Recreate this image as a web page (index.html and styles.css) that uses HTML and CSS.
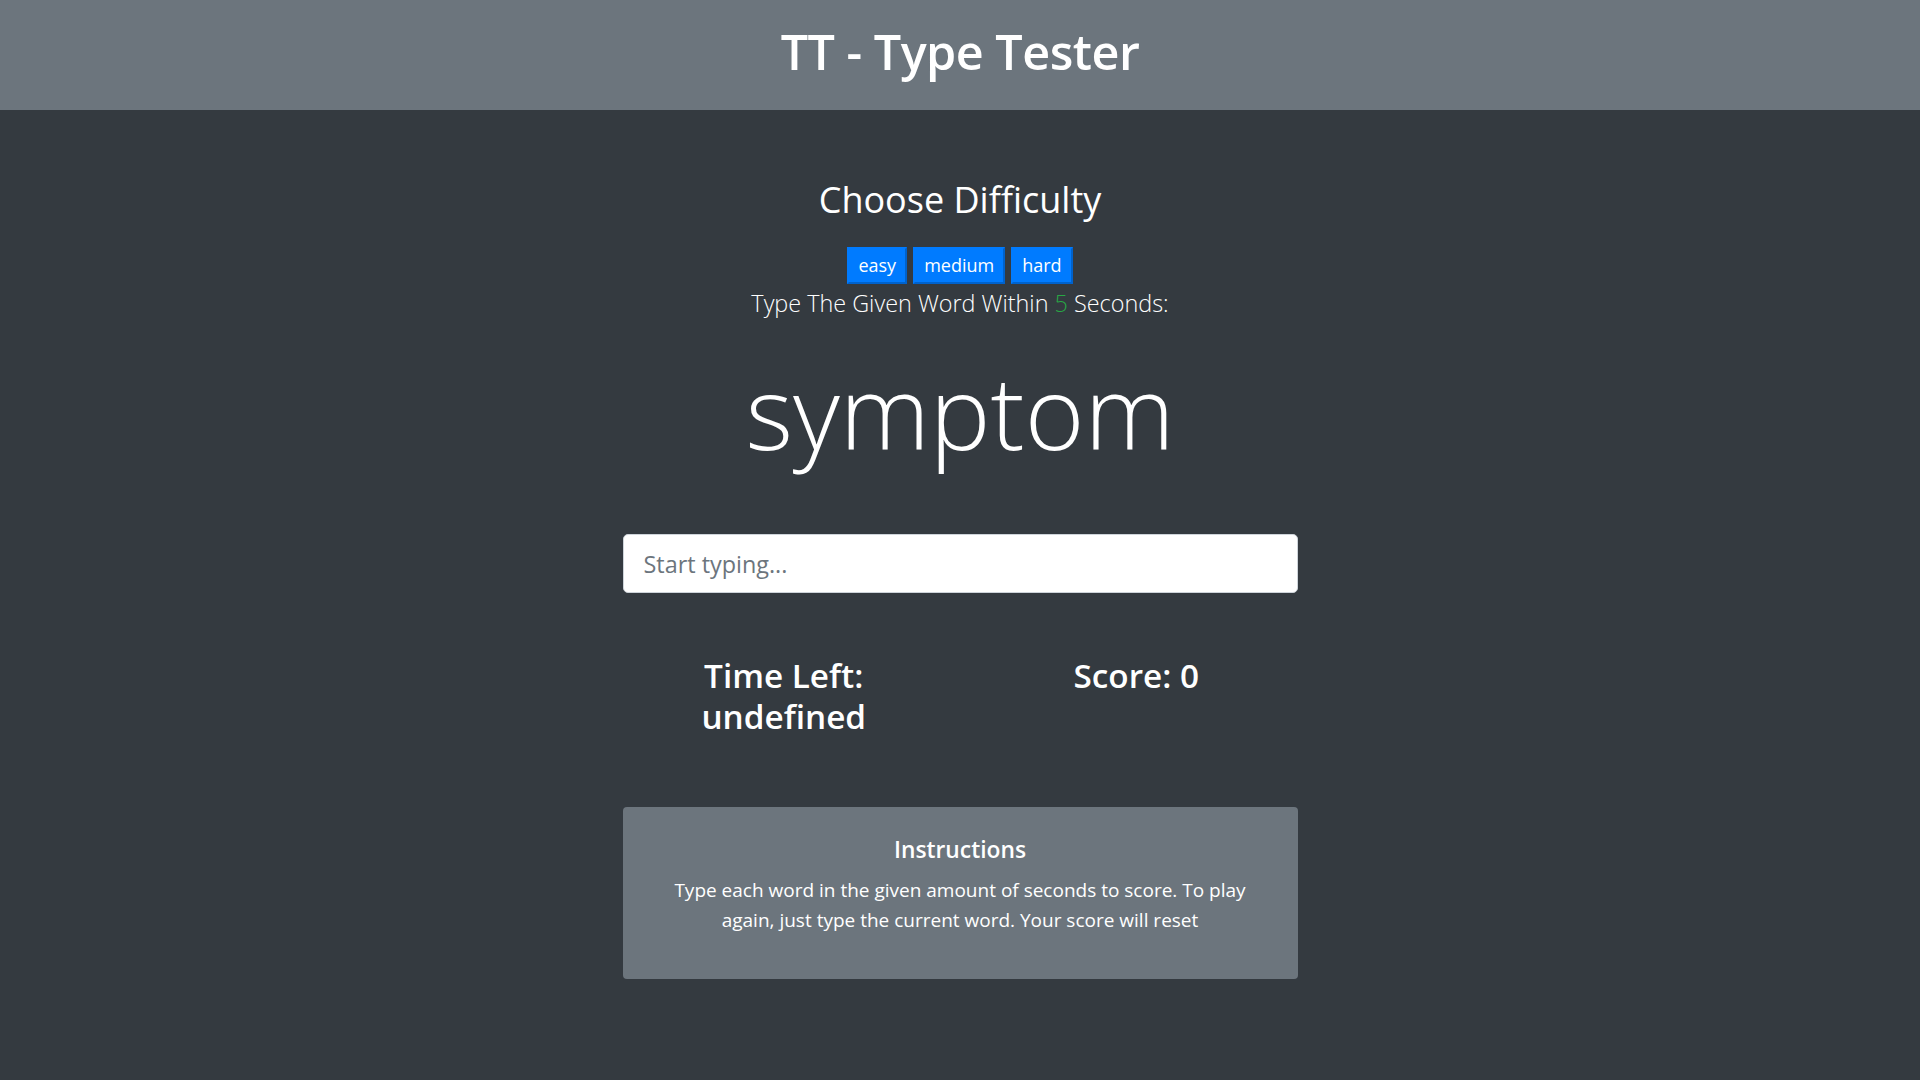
FILE: index.html
```html
<!DOCTYPE html>
<html lang="en">
<head>
<meta charset="utf-8">
<title>TT - Type Tester</title>
<link rel="stylesheet" href="styles.css">
</head>
<body>
<header class="topbar">
  <h1 class="brand">TT - Type Tester</h1>
</header>
<main class="main">
  <h2 class="choose">Choose Difficulty</h2>
  <div class="levels">
    <button class="level">easy</button>
    <button class="level">medium</button>
    <button class="level">hard</button>
  </div>
  <p class="lead">Type The Given Word Within <span class="secs">5</span> Seconds:</p>
  <h1 class="word">symptom</h1>
  <input class="typing" type="text" placeholder="Start typing...">
  <div class="stats">
    <h3 class="stat">Time Left: undefined</h3>
    <h3 class="stat">Score: 0</h3>
  </div>
  <section class="card">
    <h4 class="card-title">Instructions</h4>
    <p class="card-text">Type each word in the given amount of seconds to score. To play again, just type the current word. Your score will reset</p>
  </section>
</main>
</body>
</html>
```

FILE: styles.css
```css
html, body {
  margin: 0;
  padding: 0;
}
body {
  background: #343a40;
  color: #fff;
  font-family: "Open Sans", "Noto Sans", sans-serif;
  min-height: 1080px;
}
.topbar {
  background: #6c757d;
  height: 110px;
  box-sizing: border-box;
  padding-bottom: 7px;
  display: flex;
  align-items: center;
  justify-content: center;
}
.brand {
  margin: 0;
  font-size: 48.5px;
  font-weight: 600;
  line-height: 1.2;
  letter-spacing: -0.5px;
}
.main {
  width: 675px;
  margin: 0 auto;
  display: flex;
  flex-direction: column;
  align-items: center;
  text-align: center;
}
.choose {
  margin: 66px 0 0;
  font-size: 36px;
  font-weight: 400;
  line-height: 48px;
}
.levels {
  margin-top: 23px;
  display: flex;
  gap: 6px;
}
.level {
  font-family: inherit;
  font-size: 18px;
  line-height: 27px;
  padding: 3px 9px;
  color: #fff;
  background: #007bff;
  border-width: 2px;
  border-style: solid;
  border-color: #007bff #0062cc #0062cc #007bff;
  border-radius: 0;
}
.lead {
  margin: 1px 0 0;
  font-size: 23.4px;
  font-weight: 300;
  line-height: 36px;
}
.secs {
  color: #28a745;
}
.word {
  margin: 23px 0 0;
  font-size: 102px;
  font-weight: 300;
  line-height: 134px;
}
.typing {
  box-sizing: border-box;
  width: 100%;
  height: 59px;
  margin-top: 56px;
  padding: 0 20px;
  font-family: inherit;
  font-size: 23.4px;
  color: #495057;
  background: #fff;
  border: 1px solid #ced4da;
  border-radius: 5px;
  outline: none;
}
.typing::placeholder {
  color: #6c757d;
}
.stats {
  box-sizing: border-box;
  width: calc(100% + 30px);
  margin-top: 62px;
  display: grid;
  grid-template-columns: 1fr 1fr;
}
.stat {
  margin: 0;
  padding: 0 15px;
  font-size: 33.3px;
  font-weight: 600;
  line-height: 41px;
}
.card {
  box-sizing: border-box;
  width: 100%;
  margin-top: 70px;
  padding: 28px 45px 28px;
  background: #6c757d;
  border-radius: 4px;
}
.card-title {
  margin: 0 0 11px;
  font-size: 22.8px;
  font-weight: 600;
  line-height: 29px;
}
.card-text {
  margin: 0 0 16px;
  font-size: 19px;
  line-height: 30px;
}
```
